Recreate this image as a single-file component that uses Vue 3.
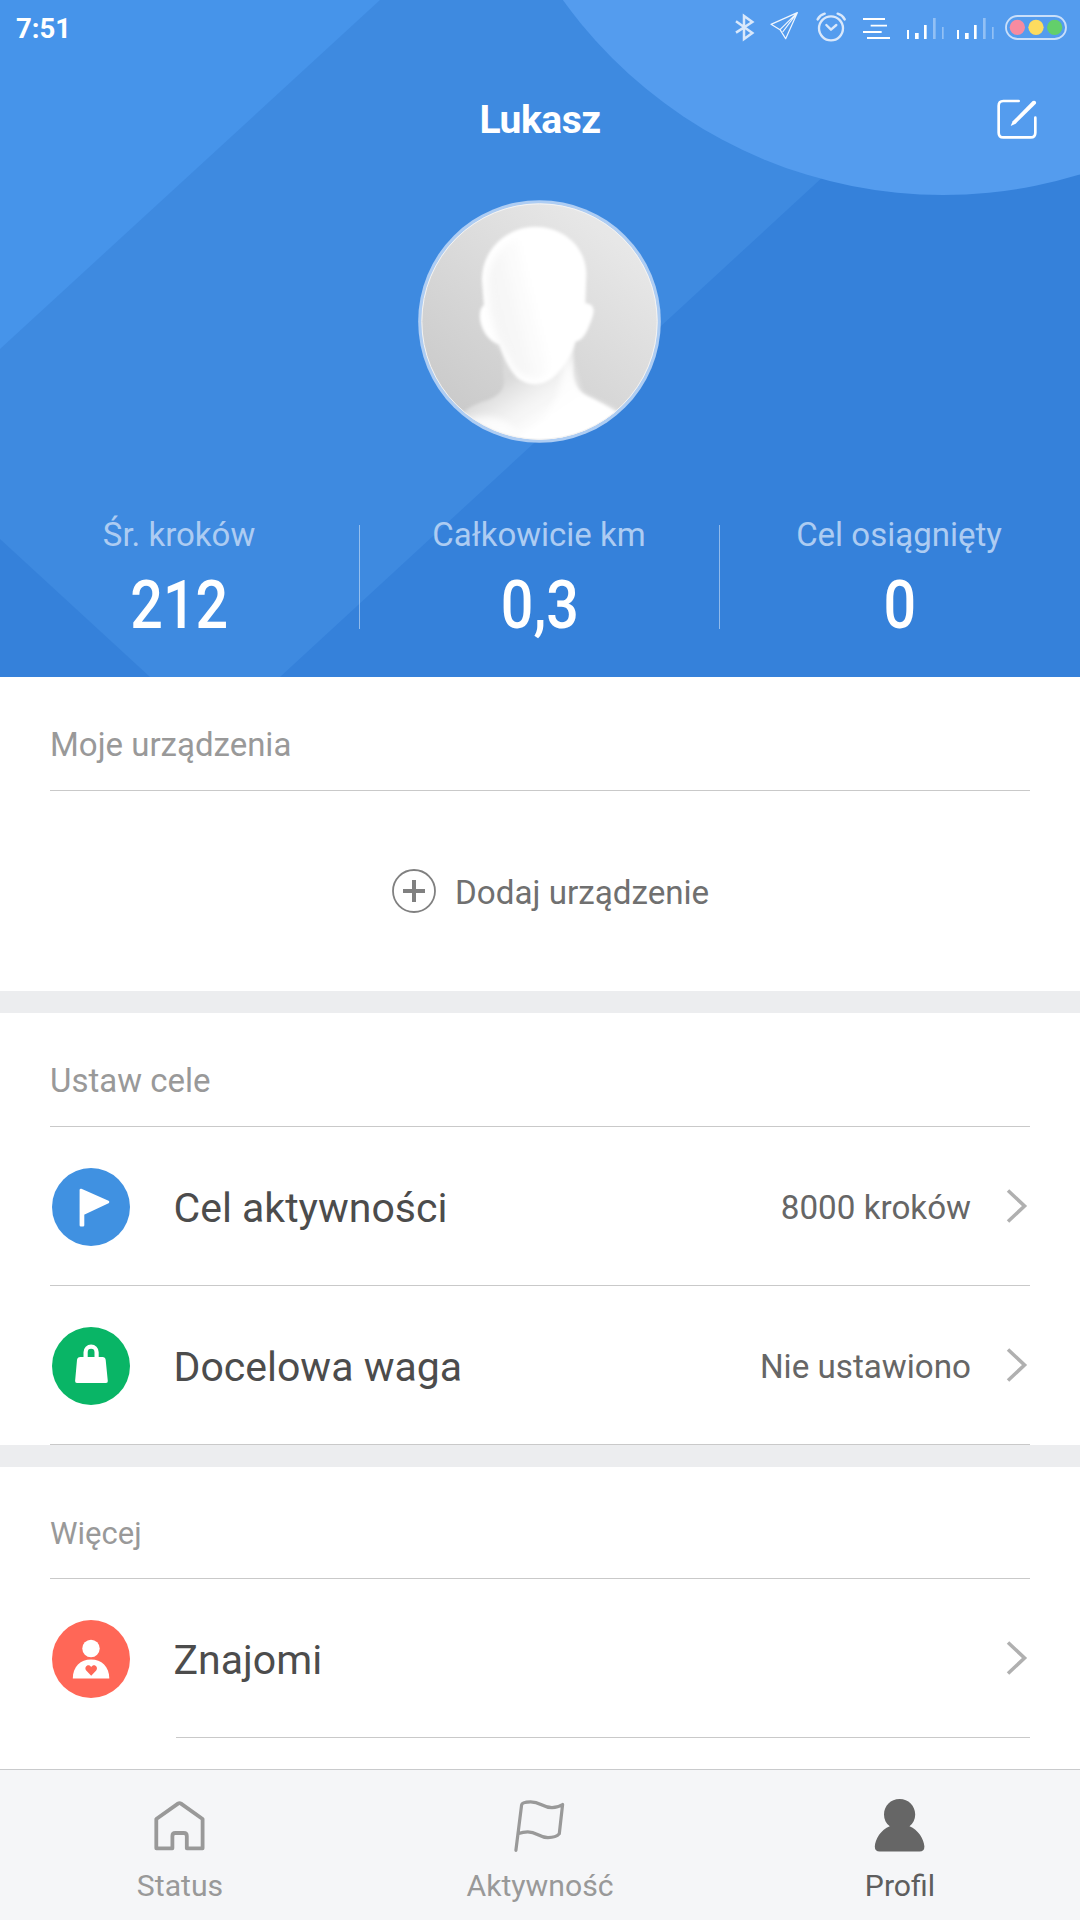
<script setup>
const stats = [
  { label: 'Śr. kroków', value: '212' },
  { label: 'Całkowicie km', value: '0,3' },
  { label: 'Cel osiągnięty', value: '0' },
]
const goals = [
  { icon: 'flag', title: 'Cel aktywności', value: '8000 kroków' },
  { icon: 'weight', title: 'Docelowa waga', value: 'Nie ustawiono' },
]
</script>

<template>
  <div class="screen">
    <header class="hero">
      <svg class="hero-bg" viewBox="0 0 1080 677" width="1080" height="677">
        <rect width="1080" height="677" fill="#3e8ae0" />
        <path d="M0 0H380L0 349Z" fill="#4694ea" />
        <path d="M1015 0H1080V677H280Z" fill="#3581da" />
        <path d="M0 539L150 677H0Z" fill="#3581da" />
        <circle cx="943" cy="-273" r="468" fill="#549cee" />
      </svg>

      <div class="status-bar">
        <span class="time">7:51</span>
        <div class="status-icons">
          <svg width="38" height="54" viewBox="0 0 114 162" fill="none" stroke="#d9e8fb" stroke-width="7.5">
            <path d="M48 64L97 99L72 117V48L97 66L48 98" />
          </svg>
          <svg width="46" height="54" viewBox="114 0 138 162" fill="none" stroke="#f0f6fe" stroke-width="3.6" stroke-linejoin="round">
            <path d="M232 38L153 73L180 89L197 116ZM232 38L180 89M232 38L188 96" />
          </svg>
          <svg width="50" height="54" viewBox="252 0 150 162" fill="none" stroke="#d9e8fb" stroke-width="7" stroke-linecap="round">
            <circle cx="333" cy="85" r="36" />
            <path d="M319 75L333 89L349 75" stroke-linejoin="round" />
            <path d="M293 58Q300 45 314 41M353 41Q367 45 374 58" stroke-width="7.5" />
          </svg>
          <svg width="46" height="54" viewBox="402 0 138 162" fill="none" stroke="#fff" stroke-width="5.5">
            <path d="M429 57H495M452 77H501M429 96H485M441 114H510" />
          </svg>
          <svg v-for="n in 2" :key="n" width="50" height="54" viewBox="540 0 150 162">
            <path d="M561 90H567V117H561ZM585 99H596V117H585ZM612 75H620V117H612Z" fill="#fff" />
            <path d="M639 54H647V117H639ZM666 81H671V117H666Z" fill="#92c0f5" />
          </svg>
          <svg width="80" height="54" viewBox="840 0 240 162">
            <rect x="858" y="48" width="180" height="69" rx="34.5" fill="none" stroke="#c9dffa" stroke-width="5.5" />
            <circle cx="892" cy="82" r="23" fill="#f78ba0" />
            <circle cx="948" cy="82" r="23" fill="#fddc5f" />
            <circle cx="1004" cy="82" r="23" fill="#63cf6b" />
          </svg>
        </div>
      </div>

      <div class="title-bar">
        <h1>Lukasz</h1>
        <svg class="edit" width="42" height="42" viewBox="828 293 126 126" fill="none" stroke="#fff" stroke-width="8" stroke-linecap="round">
          <path d="M896 302H850Q836 302 836 316V397Q836 411 850 411H932Q946 411 946 397V352" />
          <path d="M938 302Q945 299 948 305Q949 309 946 312L887 370L872 377L878 363Z" fill="#fff" stroke="none" />
        </svg>
      </div>

      <svg class="avatar" width="243" height="243" viewBox="54 60 729 729">
        <defs>
          <linearGradient id="backdrop" x1="0.15" y1="0.85" x2="0.75" y2="0.1">
            <stop offset="0" stop-color="#cbcbcb" />
            <stop offset="1" stop-color="#e7e7e7" />
          </linearGradient>
          <linearGradient id="face" gradientUnits="userSpaceOnUse" x1="260" y1="420" x2="420" y2="380">
            <stop offset="0" stop-color="#f6f6f6" />
            <stop offset="0.45" stop-color="#f7f7f7" />
            <stop offset="1" stop-color="#ffffff" />
          </linearGradient>
          <linearGradient id="torso" gradientUnits="userSpaceOnUse" x1="330" y1="590" x2="430" y2="740">
            <stop offset="0" stop-color="#dadada" />
            <stop offset="0.5" stop-color="#f2f2f2" />
            <stop offset="1" stop-color="#ffffff" />
          </linearGradient>
          <filter id="soft" x="-10%" y="-10%" width="120%" height="120%"><feGaussianBlur stdDeviation="5" /></filter>
          <filter id="softer" x="-20%" y="-20%" width="140%" height="140%"><feGaussianBlur stdDeviation="11" /></filter>
          <clipPath id="disc"><circle cx="418.5" cy="424.5" r="354" /></clipPath>
        </defs>
        <circle cx="418.5" cy="424.5" r="364" fill="#aecdf3" />
        <circle cx="418.5" cy="424.5" r="354" fill="url(#backdrop)" />
        <g clip-path="url(#disc)">
          <path d="M305 500L312 610Q310 640 270 658Q220 672 190 696L170 800H680L650 696Q600 665 560 648Q520 625 519 580L524 480Z" fill="url(#torso)" filter="url(#soft)" />
          <path d="M190 720Q330 680 380 800H660L650 696L540 640L500 500L480 620Q440 760 300 770Z" fill="#fff" opacity="0.75" filter="url(#softer)" />
          <path d="M405 140C330 140 246 200 246 300L252 375C238 385 236 410 244 436C252 462 270 485 298 494C312 530 330 575 356 596Q404 628 452 598C490 570 514 530 526 486C552 478 560 456 568 436C580 408 588 385 572 374Q562 368 556 370L559 280C556 190 480 140 405 140Z" fill="#fff" filter="url(#soft)" />
          <path d="M400 165C330 165 268 225 262 300L270 400L290 470L345 570Q375 595 405 594Q430 594 440 580L480 500V180Z" fill="url(#face)" filter="url(#softer)" />
        </g>
        <circle cx="418.5" cy="424.5" r="353" fill="none" stroke="#f4f4f4" stroke-width="3" />
      </svg>

      <div class="stats">
        <div v-for="s in stats" :key="s.label" class="stat">
          <span class="stat-label">{{ s.label }}</span>
          <span class="stat-value">{{ s.value }}</span>
        </div>
      </div>
    </header>

    <main>
      <section>
        <h2>Moje urządzenia</h2>
        <div class="add">
          <svg width="44" height="44" viewBox="0 0 44 44" fill="none" stroke="#808080">
            <circle cx="22" cy="22" r="21" stroke-width="1.8" />
            <path d="M11 22H33M22 11V33" stroke-width="4" />
          </svg>
          <span>Dodaj urządzenie</span>
        </div>
      </section>

      <section class="band">
        <h2>Ustaw cele</h2>
        <div v-for="g in goals" :key="g.title" class="row">
          <svg v-if="g.icon === 'flag'" class="badge" viewBox="0 0 78 78">
            <circle cx="39" cy="39" r="39" fill="#4091e1" />
            <path d="M28.9 22L56 34L31 45.7V57.2H28.9Z" fill="#fff" stroke="#fff" stroke-width="2.6" stroke-linejoin="round" />
          </svg>
          <svg v-else class="badge" viewBox="0 0 78 78">
            <circle cx="39" cy="39" r="39" fill="#09b566" />
            <path d="M28.4 30H50.4Q53.4 30 53.7 33L55.8 54Q56 56 54 56H25Q23 56 23.1 54L25 33Q25.3 30 28.4 30Z" fill="#fff" />
            <path d="M33.6 31V25.2A5.5 5.5 0 0 1 44.6 25.2V31" fill="none" stroke="#fff" stroke-width="4.2" />
          </svg>
          <span class="row-title">{{ g.title }}</span>
          <span class="row-value">{{ g.value }}</span>
          <svg class="chevron" viewBox="0 0 24 40"><path d="M4 4.5L20.5 20L4 35.5" /></svg>
        </div>
      </section>

      <section class="band more">
        <h2>Więcej</h2>
        <div class="row inset">
          <svg class="badge" viewBox="0 0 78 78">
            <circle cx="39" cy="39" r="39" fill="#ff6757" />
            <circle cx="39" cy="28.5" r="8.7" fill="#fff" />
            <path d="M20.8 58.4C20.8 46.5 28.5 39.4 39 39.4S57.3 46.5 57.3 58.4Z" fill="#fff" />
            <path d="M39.2 55.8L34.2 50.6C31.4 47 36.6 43 39.2 47C41.8 43 47 47 44.2 50.6Z" fill="#ff6757" />
          </svg>
          <span class="row-title">Znajomi</span>
          <svg class="chevron" viewBox="0 0 24 40"><path d="M4 4.5L20.5 20L4 35.5" /></svg>
        </div>
      </section>
    </main>

    <nav>
      <div class="tab">
        <svg viewBox="0 0 60 60" fill="none" stroke="#999" stroke-width="3.8" stroke-linejoin="round">
          <path d="M22.4 52.3H6.3V23L28 7.6Q29.5 6.6 31 7.6L52.6 23V52.3H36.8V40Q36.8 37 33.8 37H25.4Q22.4 37 22.4 40Z" />
        </svg>
        <span>Status</span>
      </div>
      <div class="tab">
        <svg viewBox="0 0 60 60" fill="none" stroke="#999" stroke-width="3.2" stroke-linejoin="round" stroke-linecap="round">
          <path d="M5.9 54.3L11.6 9Q12 5.8 20.6 5.8C31 5.8 32 11.6 42 11.6Q48 11.6 52.6 8.5L49.3 37.8Q46 41.6 38 41.6C29 41.6 27 35.8 17.8 35.8Q13 35.8 8.6 37.6" />
        </svg>
        <span>Aktywność</span>
      </div>
      <div class="tab active">
        <svg viewBox="0 0 60 60" fill="#666">
          <path d="M29.6 3C38.5 3 45.2 9.8 45.2 18.5C45.2 23.5 43 27.5 39.5 30.2C48 33.5 54 43 54.4 50.5Q54.4 55.6 49.5 55.6H9.7Q4.8 55.6 4.8 50.5C5.2 43 11 33.5 19.8 30.2C16 27.5 14 23.5 14 18.5C14 9.8 20.7 3 29.6 3Z" />
        </svg>
        <span>Profil</span>
      </div>
    </nav>
  </div>
</template>

<style>
body {
  margin: 0;
}
</style>

<style scoped>
.screen {
  width: 1080px;
  height: 1920px;
  display: flex;
  flex-direction: column;
  overflow: hidden;
  background: #fff;
  font-family: Roboto, "Noto Sans", sans-serif;
}
svg {
  display: block;
  flex: none;
}
.hero {
  position: relative;
  isolation: isolate;
  flex: none;
  height: 677px;
  color: #fff;
}
.hero-bg {
  position: absolute;
  inset: 0;
  z-index: -1;
}
.status-bar {
  height: 54px;
  display: flex;
  justify-content: space-between;
}
.time {
  padding: 2px 0 0 16px;
  font-size: 27.5px;
  font-weight: 700;
  line-height: 54px;
}
.status-icons {
  display: flex;
}
.title-bar {
  height: 130px;
  display: grid;
  grid-template-columns: 1fr auto 1fr;
  align-items: center;
}
h1 {
  grid-column: 2;
  margin: 0;
  padding-top: 2px;
  font-size: 39px;
  font-weight: 700;
  line-height: 46px;
  letter-spacing: -0.5px;
}
.edit {
  justify-self: end;
  margin-right: 42px;
}
.avatar {
  margin: 16px auto 0 418px;
}
.stats {
  display: flex;
  margin-top: 72px;
}
.stat {
  width: 360px;
  display: flex;
  flex-direction: column;
  align-items: center;
  background: linear-gradient(rgba(255, 255, 255, 0.45), rgba(255, 255, 255, 0.45)) right 10px / 1px 104px no-repeat;
}
.stat:last-child {
  background: none;
}
.stat-label {
  margin-left: -2px;
  font-size: 33px;
  line-height: 40px;
  color: #adccf2;
}
.stat-value {
  margin: 16px 0 0 -1px;
  font-size: 66px;
  font-weight: 500;
  line-height: 70px;
  transform: scaleX(0.87);
}
main {
  flex: 1;
  min-height: 0;
}
.band {
  border-top: 22px solid #ecedef;
}
h2 {
  box-sizing: border-box;
  height: 114px;
  margin: 0 50px;
  padding-top: 22px;
  border-bottom: 1px solid #c9c9c9;
  font-size: 33px;
  font-weight: 400;
  line-height: 91px;
  color: #999;
}
.more h2 {
  height: 112px;
  font-size: 31px;
  line-height: 89px;
}
.add {
  height: 200px;
  display: flex;
  align-items: center;
  padding-left: 392px;
  gap: 19px;
  font-size: 33.2px;
  color: #707070;
}
.add span {
  padding-top: 3px;
}
.row {
  height: 158px;
  display: flex;
  align-items: center;
  margin: 0 50px;
  border-bottom: 1px solid #c9c9c9;
}
.row.inset {
  border-bottom: none;
  background: linear-gradient(#c9c9c9, #c9c9c9) right bottom / 854px 1px no-repeat;
  height: 159px;
}
.row.inset > * {
  margin-bottom: 1px;
}
.badge {
  width: 78px;
  height: 78px;
  margin-left: 2px;
  padding-top: 1px;
}
.row-title {
  flex: 1;
  padding: 4px 0 0 43.5px;
  font-size: 41px;
  color: #4c4c4c;
}
.row-value {
  padding-top: 3px;
  font-size: 33.2px;
  color: #666;
}
.chevron {
  width: 24px;
  height: 40px;
  margin: 0 2px 0 33px;
  fill: none;
  stroke: #b0b0b0;
  stroke-width: 3.6;
}
nav {
  flex: none;
  box-sizing: border-box;
  height: 151px;
  display: flex;
  border-top: 1px solid #c9cacc;
  background: #f5f6f8;
  color: #999;
}
.tab {
  flex: 1;
  display: flex;
  flex-direction: column;
  align-items: center;
  padding-top: 26px;
}
.tab svg {
  width: 60px;
  height: 60px;
}
.tab span {
  margin-top: 12px;
  font-size: 30.2px;
  line-height: 36px;
}
.active {
  color: #5e5e5e;
}
</style>
